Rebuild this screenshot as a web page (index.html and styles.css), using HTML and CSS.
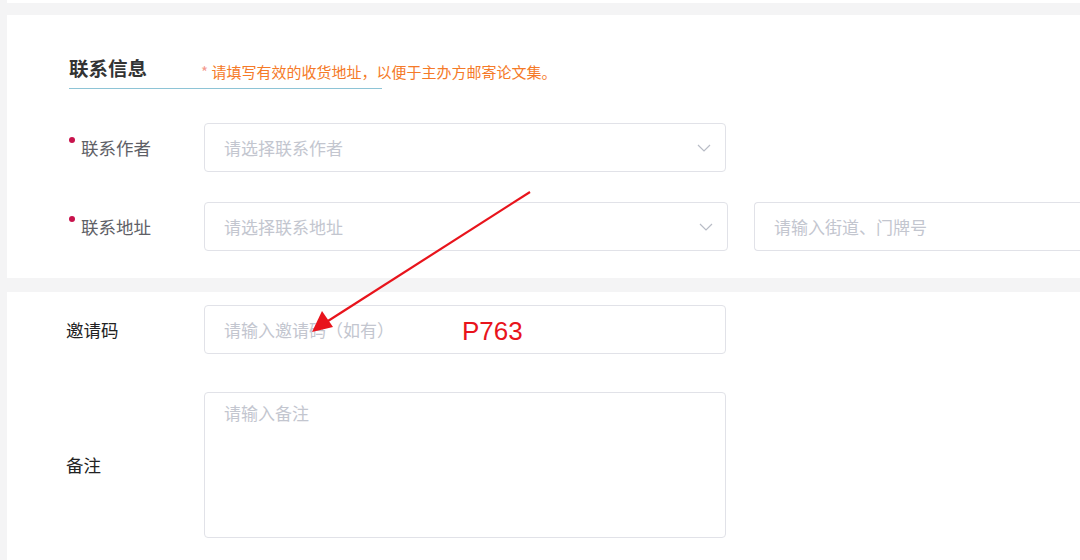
FILE: index.html
```html
<!DOCTYPE html>
<html lang="zh">
<head>
<meta charset="utf-8">
<link rel="stylesheet" href="styles.css">
</head>
<body>
<div class="page">
  <div class="top-strip"></div>
  <section class="card card-contact">
    <div class="head">
      <h2 class="head-title">联系信息</h2>
      <span class="head-note"><span class="star">*</span> 请填写有效的收货地址，以便于主办方邮寄论文集。</span>
    </div>
    <div class="row row-first">
      <label class="label required">联系作者</label>
      <div class="select">
        <span class="ph">请选择联系作者</span>
        <svg class="chev" width="14" height="8" viewBox="0 0 14 8"><path d="M1 1l6 6 6-6" fill="none" stroke="#b8bcc6" stroke-width="1.2"/></svg>
      </div>
    </div>
    <div class="row row-second">
      <label class="label required">联系地址</label>
      <div class="select select-wide">
        <span class="ph">请选择联系地址</span>
        <svg class="chev" width="14" height="8" viewBox="0 0 14 8"><path d="M1 1l6 6 6-6" fill="none" stroke="#b8bcc6" stroke-width="1.2"/></svg>
      </div>
      <div class="input input-street"><span class="ph">请输入街道、门牌号</span></div>
    </div>
  </section>
  <section class="card card-extra">
    <div class="row">
      <label class="label plain">邀请码</label>
      <div class="input"><span class="ph">请输入邀请码（如有）</span></div>
    </div>
    <div class="row row-textarea">
      <label class="label plain">备注</label>
      <div class="textarea"><span class="ph">请输入备注</span></div>
    </div>
  </section>
  <div class="annot-text">P763</div>
  <svg class="annot-arrow" width="1080" height="560" viewBox="0 0 1080 560">
    <line x1="530" y1="192" x2="328" y2="321" stroke="#e8141c" stroke-width="2.2"/>
    <polygon points="312,332 322,311 333,327" fill="#e8141c"/>
  </svg>
</div>
</body>
</html>
```

FILE: styles.css
```css
* { box-sizing: border-box; }
html, body { margin: 0; padding: 0; }
body {
  background: #f4f4f5;
  font-family: "Microsoft YaHei", "Noto Sans CJK SC", "Noto Sans", sans-serif;
  width: 1080px;
  height: 560px;
  overflow: hidden;
}
.page {
  position: relative;
  padding-left: 7px;
  height: 560px;
}
.top-strip {
  height: 3px;
  background: #fff;
}
.card {
  background: #fff;
}
.card-contact {
  margin-top: 12px;
  padding: 39px 0 27px 62px;
}
.head {
  width: 313px;
  height: 35px;
  border-bottom: 1.5px solid #8ec4d6;
  display: flex;
  align-items: flex-start;
  white-space: nowrap;
}
.head-title {
  margin: 0;
  font-size: 19.5px;
  line-height: 28px;
  font-weight: bold;
  color: #333;
}
.head-note {
  margin-left: 54px;
  margin-top: 8px;
  font-size: 15px;
  line-height: 20px;
  color: #f57a28;
}
.star { color: #f49a8e; }
.row {
  display: flex;
  align-items: center;
}
.row > * { flex-shrink: 0; }
.row-first { margin-top: 34px; }
.row-second { margin-top: 30px; }
.label {
  width: 135px;
  font-size: 17.5px;
  line-height: 24px;
  position: relative;
}
.label.required {
  padding-left: 12px;
  color: #5e6066;
}
.label.required::before {
  content: "";
  position: absolute;
  left: 0;
  top: 1px;
  width: 6px;
  height: 6px;
  border-radius: 50%;
  background: #c8134c;
}
.label.plain {
  color: #222;
}
.select, .input, .textarea {
  width: 522px;
  height: 49px;
  border: 1px solid #e1e2e8;
  border-radius: 4px;
  display: flex;
  align-items: center;
  padding-left: 19px;
  padding-right: 14px;
  background: #fff;
}
.select { justify-content: space-between; }
.select-wide { width: 524px; }
.input-street {
  margin-left: 26px;
  width: 340px;
  border-right: none;
  border-radius: 4px 0 0 4px;
}
.ph {
  font-size: 17px;
  color: #c3c6cf;
  white-space: nowrap;
}
.card-extra {
  margin-top: 14px;
  padding: 13px 0 30px 59px;
  height: 268px;
}
.card-extra .label { width: 138px; }
.row-textarea { margin-top: 38px; }
.textarea {
  height: 146px;
  align-items: flex-start;
  padding-top: 7px;
}
.annot-text {
  position: absolute;
  left: 462px;
  top: 314px;
  font-family: "Liberation Sans", Arial, sans-serif;
  font-size: 26px;
  line-height: 34px;
  color: #e8141c;
}
.annot-arrow {
  position: absolute;
  left: 0;
  top: 0;
  pointer-events: none;
}
```
